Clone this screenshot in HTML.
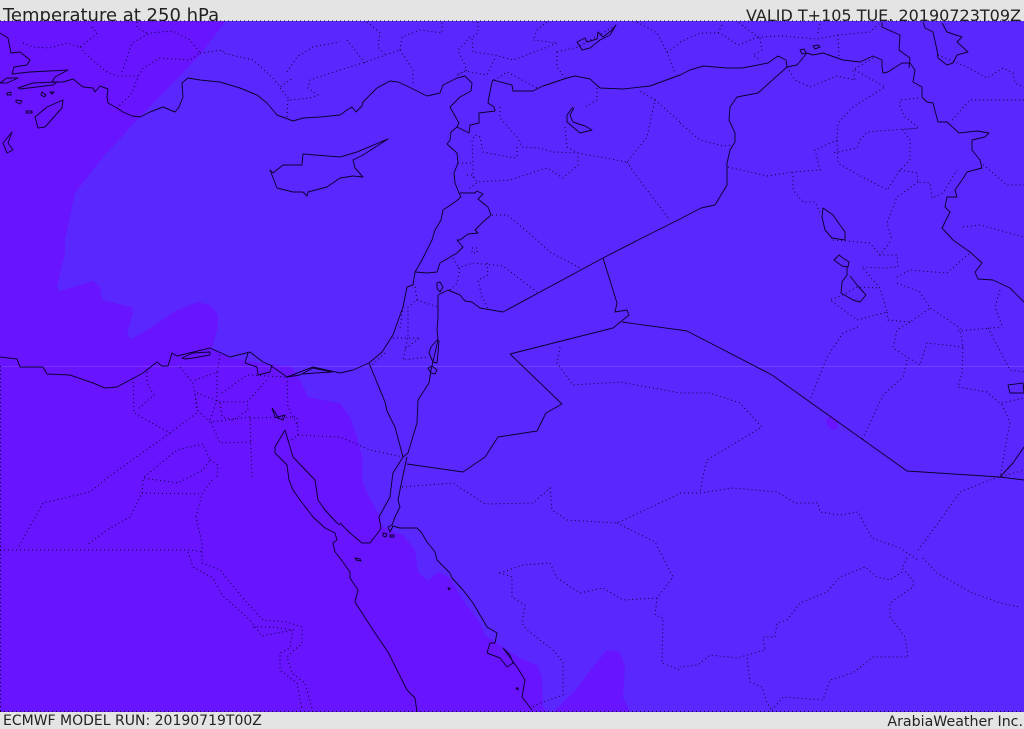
<!DOCTYPE html>
<html><head><meta charset="utf-8"><style>
html,body{margin:0;padding:0;background:#e4e4e4}
#w{position:relative;width:1024px;height:729px;overflow:hidden;background:#e4e4e4;font-family:"DejaVu Sans","Liberation Sans",sans-serif;color:#222}
.t{position:absolute;white-space:nowrap;line-height:1}
svg{position:absolute;left:0;top:0}
</style></head><body><div id="w">
<div class="t" style="left:3px;top:7px;font-size:18px">Temperature at 250 hPa</div>
<div class="t" style="right:3px;top:8px;font-size:16px">VALID T+105 TUE. 20190723T09Z</div>
<div class="t" style="left:3px;top:714px;font-size:14px">ECMWF MODEL RUN: 20190719T00Z</div>
<div class="t" style="right:1px;top:715px;font-size:14.2px">ArabiaWeather Inc.</div>
<svg width="1024" height="729" viewBox="0 0 1024 729">
<rect x="0" y="21" width="1024" height="691" fill="#6814ff"/>
<path fill="#5a28ff" d="M226,21 L200,55 L140,117 L103,157 L75,193 L65,240 L65,253 L57,287 L60,291 L93,281 L100,287 L102,300 L132,307 L133,312 L127,335 L132,339 L147,330 L177,310 L197,302 L210,305 L218,315 L217,330 L212,348 L230,358 L267,364 L292,367 L300,380 L308,397 L333,402 L340,403 L350,417 L358,440 L363,460 L362,480 L367,493 L378,513 L383,527 L403,535 L415,550 L418,572 L428,581 L438,572 L450,578 L463,600 L480,623 L485,635 L497,643 L517,657 L537,665 L542,677 L543,707 L548,712 L553,712 L573,693 L593,667 L607,650 L620,652 L625,667 L623,697 L630,712 L1024,712 L1024,21 Z"/>
<path fill="#6814ff" d="M826,420 L831,415 L837,421 L838,428 L833,430 L827,426 Z"/>
<rect x="0" y="366" width="1024" height="1" fill="#fff" opacity=".13"/>

<g fill="none" stroke="#0c0030" stroke-width="1" stroke-dasharray="1 3">
<path d="M0,21H1024M0,711.5H1024M.5,366V711"/>
<polyline points="23,43 33,47 50,48 67,43 80,47 93,37 97,33 92,27"/>
<polyline points="80,47 90,58 107,72 117,76 138,76"/>
<polyline points="122,72 132,43 150,33 173,31 190,40 200,53 190,60 160,58 143,68 138,77 132,93 117,108"/>
<polyline points="137,22 137,28 147,33"/>
<polyline points="200,53 223,50 223,53 253,60 273,78 280,87 293,78"/>
<polyline points="280,88 290,100 310,98 318,95 308,88 310,80 340,70"/>
<polyline points="287,72 297,57 313,47 340,42"/>
<polyline points="288,100 287,117"/>
<polyline points="340,70 363,63 400,50"/>
<polyline points="347,40 365,63"/>
<polyline points="367,22 380,33 378,47 385,55"/>
<polyline points="400,50 402,37 420,30 442,33 442,22"/>
<polyline points="400,50 413,70 413,83"/>
<polyline points="478,22 478,33 472,37 473,52 495,55 513,60 540,50 557,43 533,40 537,30 547,22"/>
<polyline points="470,37 458,50 467,70 457,75"/>
<polyline points="457,75 465,71 487,75 495,58"/>
<polyline points="494,80 507,72 537,88"/>
<polyline points="557,52 578,47 613,27"/>
<polyline points="557,52 557,67 565,78"/>
<polyline points="637,22 657,33 667,52 675,73"/>
<polyline points="667,52 680,43"/>
<polyline points="597,88 597,100 583,108"/>
<polyline points="565,127 567,147 578,153 578,165 563,178 547,168 510,180 478,182 467,190"/>
<polyline points="500,107 500,118 517,137 522,147 540,148 553,152 578,153 627,162 647,137 655,100 638,90"/>
<polyline points="655,100 680,122"/>
<polyline points="627,162 637,177 670,220"/>
<polyline points="517,147 517,157 513,158 483,152 480,137 475,135 472,140 473,163 473,180"/>
<polyline points="458,163 473,163"/>
<polyline points="467,175 473,175 477,182"/>
<polyline points="492,215 507,215 537,240 550,252 580,268"/>
<polyline points="680,42 700,33 720,33 738,45 758,37 738,22"/>
<polyline points="718,33 723,23"/>
<polyline points="758,37 783,36 817,39 838,35 870,32 880,23"/>
<polyline points="818,33 820,23"/>
<polyline points="838,35 839,57"/>
<polyline points="760,38 762,50 753,55 760,60"/>
<polyline points="787,67 795,80 810,87 837,76 855,80 853,70 873,58"/>
<polyline points="855,70 885,87 853,107 838,123 837,140 838,163 853,172 887,190 900,170 910,160 910,140 903,130 918,128 867,132 860,140 857,148 833,153"/>
<polyline points="837,140 815,150 820,170 793,172 793,190 803,202 815,202 820,213"/>
<polyline points="728,167 767,176 793,172"/>
<polyline points="680,123 700,140 723,146 733,145"/>
<polyline points="918,98 900,100 900,107 905,117 918,127"/>
<polyline points="900,170 917,173 918,182 930,183 932,198 943,193 957,170"/>
<polyline points="918,182 897,197 887,223 892,240"/>
<polyline points="952,120 970,100 1024,100"/>
<polyline points="980,162 1007,185 1024,185"/>
<polyline points="938,55 967,67 987,78 1003,68 1013,73 1015,83 1024,87"/>
<polyline points="963,227 980,225 1024,237"/>
<polyline points="890,242 880,255 897,255 898,267 883,268 862,267 880,288 887,312 857,320 830,300 843,295 857,287 880,288"/>
<polyline points="833,240 870,243 880,255"/>
<polyline points="897,277 910,270 947,273 970,253"/>
<polyline points="897,283 920,292 930,308 960,328 963,347 962,373 958,387 987,392 1002,405 1010,422 1000,477"/>
<polyline points="1000,290 995,307 1003,328"/>
<polyline points="958,331 1002,327"/>
<polyline points="988,328 1010,370 1024,372"/>
<polyline points="1002,403 1024,398"/>
<polyline points="887,312 888,320 910,322 930,308"/>
<polyline points="910,322 897,330 893,348 920,365 927,343 963,347"/>
<polyline points="907,360 903,377 883,395 862,440"/>
<polyline points="858,327 843,333 827,357 810,400"/>
<polyline points="560,347 557,363 573,385 620,382 680,393 710,393 740,403 762,427 707,460 702,480 702,483 700,493"/>
<polyline points="680,493 700,493 733,488 777,492 795,503 818,503 820,512 840,515 858,512 872,538 900,548 918,560"/>
<polyline points="918,550 933,530 960,492 990,480 1024,470"/>
<polyline points="923,558 937,573 970,592 1000,603 1020,607"/>
<polyline points="907,558 902,568 913,580 913,587 890,603 890,617 905,637 908,657 873,657 853,673 830,680 823,700 783,697 772,710"/>
<polyline points="902,572 890,580 877,577 865,567 840,577 827,592 800,603 787,620 777,623 775,637 763,637 765,650 737,658 710,655 698,665 680,667"/>
<polyline points="747,658 750,682 762,687 767,703 772,710"/>
<polyline points="402,487 453,483 485,504 533,503 550,488 552,510 567,520 617,523 677,495 680,493"/>
<polyline points="617,523 655,542 673,577 657,598 623,600 603,588 580,593 557,578 550,563 523,565 500,573 512,577 512,597 525,605 522,623 527,630 553,650 563,662 563,695 540,703 532,707"/>
<polyline points="657,598 655,615 663,618 662,663 680,670"/>
<polyline points="133,378 134,413 170,433 198,412 193,383 180,367"/>
<polyline points="147,372 147,383 154,395 137,410"/>
<polyline points="195,380 217,372 220,355"/>
<polyline points="217,372 217,400 210,420 220,443 252,442"/>
<polyline points="197,393 220,402 247,402 267,380"/>
<polyline points="222,393 247,375 287,377"/>
<polyline points="220,403 222,417 233,420 248,410 247,402"/>
<polyline points="195,395 197,410 210,422 250,417 252,480"/>
<polyline points="250,418 297,417 298,435 287,443"/>
<polyline points="298,435 340,437 370,450 403,457"/>
<polyline points="287,377 288,407 298,427"/>
<polyline points="170,433 107,478 90,492 43,503 18,548"/>
<polyline points="203,444 177,450 143,478 178,483 203,470 210,460 203,444"/>
<polyline points="210,460 218,465 217,478"/>
<polyline points="143,480 142,493 130,517 107,530 87,545"/>
<polyline points="142,493 200,494"/>
<polyline points="212,480 202,494 196,517 202,543 202,563"/>
<polyline points="0,550 190,550 202,552"/>
<polyline points="188,552 193,567 213,578 222,595 250,620 262,636 293,630"/>
<polyline points="202,563 220,570 242,597 263,620 287,622 302,627 302,643 287,657 292,673 305,683 313,712"/>
<polyline points="253,627 273,627 293,630 290,648 280,653 280,670 297,683 302,710"/>
<polyline points="453,258 460,270 457,283 450,290"/>
<polyline points="458,268 473,263 503,266 537,292"/>
<polyline points="487,263 488,275 478,280 482,297 488,308"/>
<polyline points="472,248 477,248 477,253 472,253 472,248"/>
<polyline points="415,287 417,300 408,307 408,337 403,360 427,357"/>
<polyline points="417,300 438,307"/>
<polyline points="393,338 420,338 403,350"/>
<polyline points="403,307 400,328"/>
<polyline points="385,353 370,367"/>
</g>

<g fill="none" stroke="#0c0030" stroke-width=".95" stroke-linejoin="round">
<polyline points="0,33 8,38 11,53 20,52 30,60 27,65 14,67 12,74 30,72 68,70 55,77 52,82 63,82 73,79 83,87 93,88 95,92 100,86 108,89 107,97 108,103 117,108 123,112 132,116 140,117 150,112 163,107 175,112 179,107 183,97 182,83 188,78 200,80 220,82 240,88 257,95 267,103 277,115 293,121 303,118 320,117 340,115 347,110 352,107 356,112 362,106 363,102 377,88 390,81 398,82 407,86 427,96 440,93 443,85 457,78 465,76 472,83 471,91 460,97 450,107 459,123 457,127 451,132 450,140 447,144 457,153 458,163 454,173 455,183 459,193 461,197 455,202 443,210 441,220 435,230 432,240 422,260 415,272 413,285 407,287 403,307 393,335 382,352 369,363 353,370 340,373"/>
<polyline points="0,357 17,359 20,367 43,367 47,374 70,375 93,383 105,388 117,387 143,373 157,362 162,366 168,366 172,353 177,356 210,348 230,357 250,352 263,362 270,365 287,377 313,367 340,373"/>
<polyline points="460,193 475,193 477,191 483,194 478,199 488,207 491,215 483,222 475,230 478,233 468,234 460,240 457,240 463,247 457,253 440,263 437,272 427,273 415,272"/>
<polyline points="457,127 469,133 470,125 479,123 479,113 495,111 494,107 488,103 489,97 492,82 493,80 512,85 513,91 533,91 543,86 567,78 575,76 590,79 600,88 623,89 650,86 680,75 690,70 703,66 727,68 742,68 768,63 778,56 786,60 787,67 797,65 807,53 813,55 823,53 843,60 860,62 873,56 882,60 882,67 883,73 888,72 902,63 910,63 915,70 913,82 922,87 922,97 927,102 933,103 938,122 947,122 959,133 977,131 989,133 985,137 972,140 972,150 980,160 982,168 967,172 962,180 955,190 957,197 947,197 945,207 950,212 942,228 953,240 960,245 970,252 982,263 975,272 978,279 993,280 1010,288 1024,302"/>
<polyline points="882,22 882,27 893,32 900,35 899,50 910,58 909,68"/>
<polyline points="787,67 758,93 737,97 730,107 729,120 735,133 735,142 730,150 727,163 727,185 715,205 701,208 680,219 638,240 603,258 503,312"/>
<polyline points="603,258 617,303 615,312 627,310 629,315 613,328 510,354 562,404 546,413 537,431 498,437 485,457 463,472 407,464"/>
<polyline points="622,322 680,330 687,331 772,375 907,471 1000,477 1024,480"/>
<polyline points="1000,477 1013,463 1024,447"/>
<polyline points="438,295 448,290 460,295 465,301 472,302 480,308 503,312"/>
<polyline points="438,295 438,317 437,330 438,340 431,370 429,383 418,400 417,423 408,453 403,457"/>
<polyline points="369,363 385,402 387,411 395,427 403,457"/>
<path d="M431,347 437,340 439,341 438,353 437,363 433,362 429,353ZM428,368 432,366 437,370 435,374 431,373ZM437,283 440,282 443,287 440,292 437,288Z"/>
<polyline points="403,457 393,473 392,480 390,497 379,517 381,528 380,530 370,543 362,543 350,533 340,523"/>
<polyline points="407,457 402,480 398,500 400,507 395,517 392,525 388,527 390,532 393,526 400,528 417,528 421,532 427,542 435,552 437,560 450,573 452,578 463,590 473,603 487,627 497,633 495,643 490,643 487,653 500,658 507,667 513,663 510,655 503,648 517,667 525,680 522,697 532,710"/>
<polyline points="285,430 275,447 275,453 287,465 289,480 293,490 300,500 313,517 325,528 335,533 337,540 333,543 335,552 340,558 350,572 350,578 358,590 355,602 373,630 388,652 407,690 415,698 417,712"/>
<polyline points="285,430 293,457 315,480 318,500 325,510 337,523 340,525"/>
<path d="M303,154 340,157 357,152 388,139 363,155 353,160 355,168 363,177 353,176 340,178 327,187 308,192 307,196 303,192 293,192 277,188 270,170 273,173 283,165 302,165Z"/>
<path d="M923,22 925,28 933,32 937,50 938,58 947,65 953,63 957,55 968,52 957,42 962,37 947,32 942,23"/>
<path d="M573,107 567,115 567,122 580,133 592,130 585,126 573,122 570,115 574,108"/>
<path d="M577,42 585,38 587,42 597,39 598,32 603,37 612,30 616,25 610,35 600,40 590,48 582,50Z"/>
<path d="M823,208 822,217 825,230 832,238 845,240 845,232 840,225 833,215Z"/>
<path d="M834,260 839,255 843,258 849,262 848,267 842,266ZM847,267 847,275 842,282 841,293 853,300 860,302 866,295 857,285 850,276"/>
<path d="M1008,385 1023,383 1024,393 1010,393Z"/>
<path d="M272,408 278,417 285,415 283,420 275,417Z"/>
<path d="M182,358 193,353 210,352 210,355 193,358 185,359ZM248,353 245,363 257,367 258,375 270,372 272,365M287,377 300,375 313,368 332,372 315,373 303,374"/>
<path d="M18,88 33,83 57,82 53,85 20,89ZM0,83 7,78 18,78 7,83ZM63,100 47,107 35,117 38,128 45,127 62,108ZM3,143 12,132 8,143 13,150 7,153ZM42,92 46,95 44,97 41,95ZM16,100 22,101 20,104 16,102ZM7,93 11,92 11,95 7,95ZM26,111 32,111 32,113 26,113ZM50,92 54,92 52,94ZM383,533 387,534 386,537 383,536ZM390,535 394,535 394,537 390,537ZM355,558 360,559 361,561 356,560ZM448,588 450,588 449,590ZM516,688 518,688 518,690ZM800,50 804,49 806,53 802,54ZM813,46 818,45 820,47 815,49Z"/>
</g>
</svg>
</div></body></html>
